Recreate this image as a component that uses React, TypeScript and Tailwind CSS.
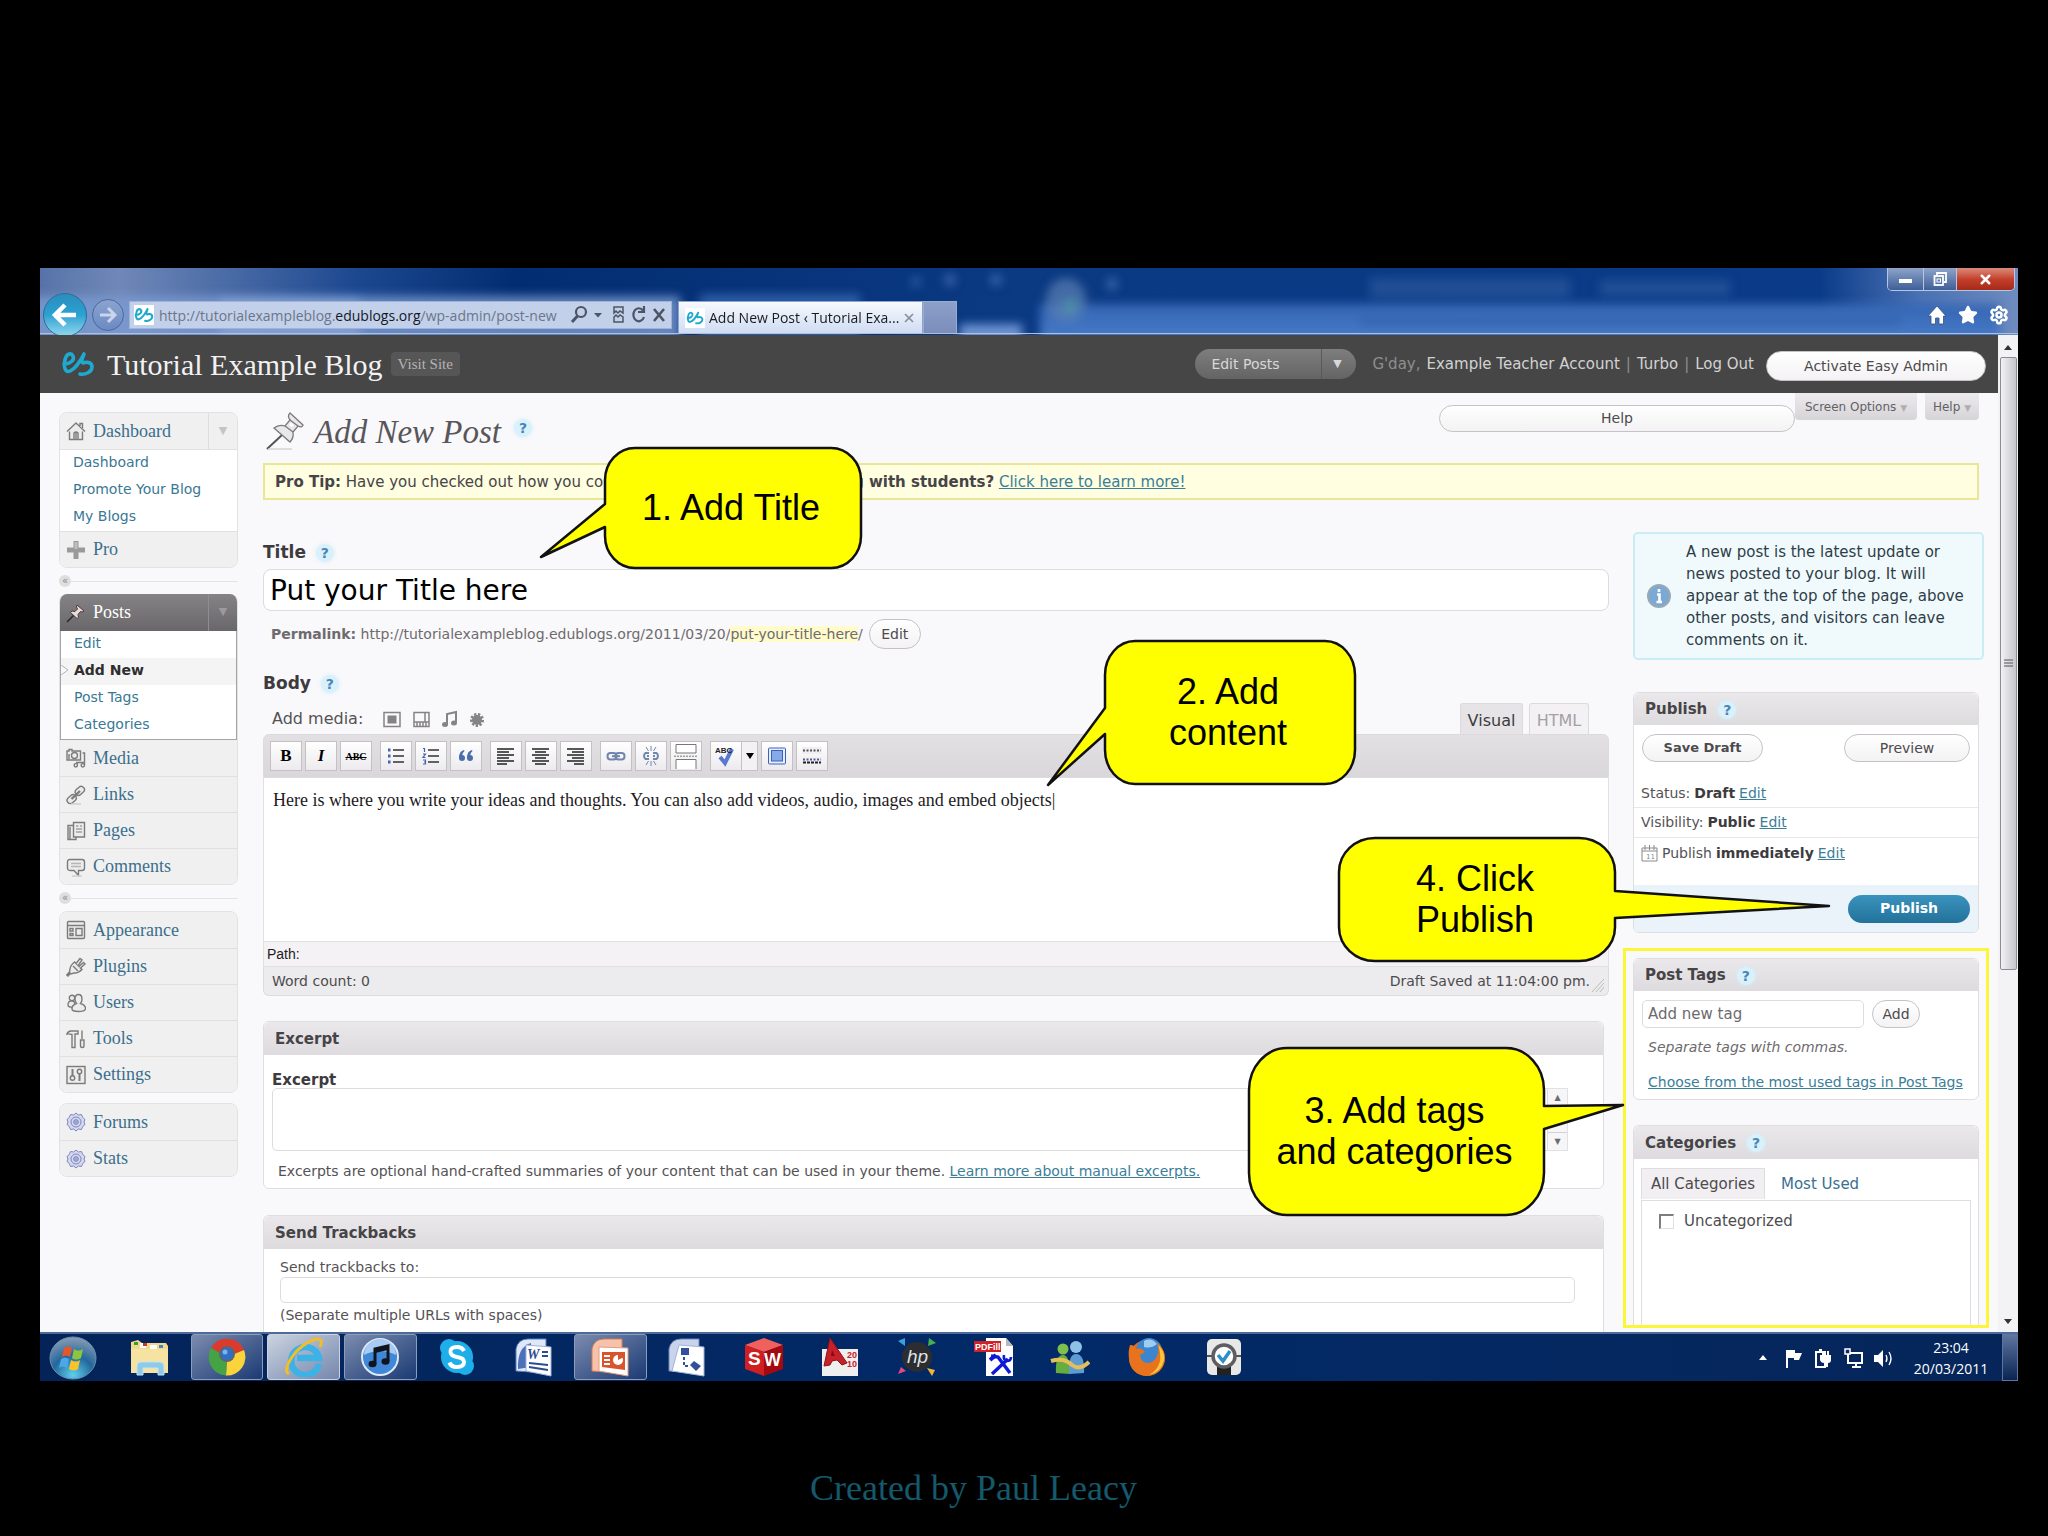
import type { ReactNode } from 'react';
import { Star, Settings, X } from 'lucide-react';

const Logo = ({ className }: { className: string }) => (
  <svg viewBox="0 0 34 26" className={className} fill="none" aria-hidden="true">
    <path
      d="M3 13C9 13 14 9 12 5C10 1 5 3 4 9C2 17 5 22 9 20C14 18 20 9 23 3C21 8 20 11 22 12C27 10 31 12 31 16C31 21 24 24 19 23"
      stroke="#1fa9cf"
      strokeWidth="3.600"
      strokeLinecap="round"
      strokeLinejoin="round"
    />
  </svg>
);

const HelpDot = () => (
  <button
    aria-label="Help"
    className="flex h-[18px] w-[18px] items-center justify-center rounded-full bg-[#d9f1fb] text-[14px] leading-none font-bold text-[#4a84b8] shadow-[0_0_4px_#d3effb]"
  >
    ?
  </button>
);

const icon = 'h-5 w-5 shrink-0';
const line = { fill: '#ececec', stroke: '#7b7b7b', strokeWidth: 1.4 };

const DashboardIcon = () => (
  <svg viewBox="0 0 20 20" className={icon} {...line}>
    <path d="M3.500 9V18.500H16.500V9" />
    <path d="M1 10.500L10 2L19 10.500" strokeLinejoin="round" />
    <path d="M14 5V2.500H16.500V7" />
    <path d="M8 18V12Q10 10 12 12V18M10 11V18" />
  </svg>
);
const ProIcon = () => (
  <svg viewBox="0 0 20 20" className={icon}>
    <path d="M7.500 1H12.500V7.500H19V12.500H12.500V19H7.500V12.500H1V7.500H7.500Z" fill="#9a9a9a" />
    <path d="M8.500 2H11.500V9H8.500Z" fill="#bdbdbd" />
  </svg>
);
const PinIcon = () => (
  <svg viewBox="0 0 20 20" className={icon}>
    <path d="M8 12L1 19" stroke="#2b2b2b" strokeWidth="1.600" />
    <path
      d="M11 2L18 8L16 9L14.500 8.500L12 11.500L12.500 14.500L11 15.500L4.500 9.500L6 8L9 8.500L11.500 6L10.500 4Z"
      fill="#e9dcd8"
      stroke="#4a3b38"
    />
  </svg>
);
const MediaIcon = () => (
  <svg viewBox="0 0 20 20" className={icon} {...line}>
    <path d="M1 3H3V1.500H6V3H14.500V12H1Z" />
    <circle cx="8.500" cy="7.500" r="3" />
    <path d="M3 6V11" />
    <path d="M16.500 5H18.500V17M10 14.500H18.500M11 17V14" />
    <circle cx="9.800" cy="17.300" r="1.700" />
    <circle cx="16.800" cy="17.300" r="1.700" />
  </svg>
);
const LinksIcon = () => (
  <svg viewBox="0 0 20 20" className={icon} {...line}>
    <rect x="9" y="2.500" width="10" height="6.500" rx="3.200" transform="rotate(-42 14 6)" />
    <rect x="0.500" y="11" width="10" height="6.500" rx="3.200" transform="rotate(-42 5.500 14)" />
    <path d="M5.500 14L14 6" strokeWidth="2.400" />
    <path d="M5 19H15" stroke="#cfcfcf" />
  </svg>
);
const PagesIcon = () => (
  <svg viewBox="0 0 20 20" className={icon} {...line}>
    <path d="M2 4.500H10V18.500H2Z" />
    <path d="M4 18V6" />
    <path d="M7.500 1.500H18.500V16H7.500Z" />
    <path d="M10 5H12.500M14 5H16M10 8H16M10 11H16" strokeWidth="1" />
  </svg>
);
const CommentsIcon = () => (
  <svg viewBox="0 0 20 20" className={icon} {...line}>
    <path d="M4 2.500H16Q18.500 2.500 18.500 5V11Q18.500 13.500 16 13.500H12.500V18.500L8 13.500H4Q1.500 13.500 1.500 11V5Q1.500 2.500 4 2.500Z" />
    <path d="M5 6.500H15M5 9.500H15" stroke="#b5b5b5" />
    <path d="M6 19H16" stroke="#cfcfcf" />
  </svg>
);
const AppearanceIcon = () => (
  <svg viewBox="0 0 20 20" className={icon} {...line}>
    <rect x="1.500" y="1.500" width="17" height="17" rx="1" />
    <path d="M2 5.500H18" />
    <path d="M4 8.500H7V11H4ZM4 13.500H7V15.500H4ZM10 8.500H16V15.500H10Z" />
  </svg>
);
const PluginsIcon = () => (
  <svg viewBox="0 0 20 20" className={icon} {...line}>
    <path d="M1 19L4.500 15" strokeWidth="3" />
    <path d="M8.500 5L16 12.500Q12 16.500 8 16L5 17L3.500 15.500L4 12Q4.500 8 8.500 5Z" />
    <path d="M10 6.500L14 1.500L16 3L12.500 8M14 11.500L19 7L17.500 5.500L13 9.500" />
    <path d="M7 9L12 14" />
  </svg>
);
const UsersIcon = () => (
  <svg viewBox="0 0 20 20" className={icon} {...line}>
    <circle cx="6" cy="5" r="2.700" />
    <path d="M2 12Q2 7.500 6 8Q9 8 9 12L7 14Q2 14.500 2 12Z" />
    <path d="M9 6Q9 1.500 12.500 1.500Q16 1.500 16 6Q16 9 14.500 10.500Q19.500 12 19.500 15.500Q19.500 18.500 12.500 18.500Q5.500 18.500 6 15.500Q6 12 10.500 10.500Q9 9 9 6Z" />
  </svg>
);
const ToolsIcon = () => (
  <svg viewBox="0 0 20 20" className={icon} {...line}>
    <path d="M1 5Q2 1.500 6 2H12V5H9V18.500H6V5.500Q3 4.500 1 5Z" />
    <path d="M16 1.500V10M14.500 11H18V17Q18 18.500 16.300 18.500Q14.500 18.500 14.500 17Z" />
  </svg>
);
const SettingsIcon = () => (
  <svg viewBox="0 0 20 20" className={icon} {...line}>
    <rect x="1" y="1.500" width="18" height="17" />
    <path d="M6.500 4V11M13.500 9V16" strokeWidth="2" />
    <circle cx="6.500" cy="13" r="2.200" />
    <circle cx="13.500" cy="6.500" r="2.200" />
  </svg>
);
const GearIcon = () => (
  <svg viewBox="0 0 20 20" className={icon} fill="#d5d8f2" stroke="#7e86b8">
    <path d="M10 1L12.300 3L15.500 2.500L16.700 5.500L19 7.500L18 10L19 12.500L16.700 14.500L15.500 17.500L12.300 17L10 19L7.700 17L4.500 17.500L3.300 14.500L1 12.500L2 10L1 7.500L3.300 5.500L4.500 2.500L7.700 3Z" />
    <circle cx="10" cy="10" r="5" />
    <circle cx="10" cy="10" r="2.400" />
    <rect x="9" y="9" width="2" height="2" fill="#fff" />
  </svg>
);

type MenuItemProps = { label: string; children: ReactNode; first?: boolean };

const MenuItem = ({ label, children, first }: MenuItemProps) => (
  <a
    href="#"
    className={`flex h-9 items-center gap-[7px] bg-[#f1f0f1] pl-[6px] font-['Liberation_Serif',serif] text-[18px] text-[#3a6f8c] ${
      first ? '' : 'border-t border-[#e0e0e0]'
    }`}
  >
    {children}
    {label}
  </a>
);

const Separator = () => (
  <div className="flex h-[26px] items-center">
    <span className="flex h-3 w-3 items-center justify-center rounded-full bg-[#dedede] text-[10px] leading-none text-[#8a8a8a]">
      «
    </span>
    <span className="h-px flex-1 bg-[#e4e4e4]" />
  </div>
);

const menuBox = 'overflow-hidden rounded-[8px] border border-[#e2e2e2]';
const subLink = 'block h-[27px] pl-[13px] text-[14px] leading-6';

const Sidebar = () => (
  <nav className="w-[179px] shrink-0 pt-[19px]">
    <div className={menuBox}>
      <div className="flex">
        <div className="flex-1">
          <MenuItem label="Dashboard" first>
            <DashboardIcon />
          </MenuItem>
        </div>
        <button
          aria-label="Toggle Dashboard"
          className="w-[29px] border-l border-[#dedede] bg-[#f1f0f1] text-[11px] text-[#c4c4c4]"
        >
          ▼
        </button>
      </div>
      <div className="border-t border-[#e0e0e0] bg-white text-[#3a7894]">
        <a href="#" className={subLink}>Dashboard</a>
        <a href="#" className={subLink}>Promote Your Blog</a>
        <a href="#" className={subLink}>My Blogs</a>
      </div>
      <MenuItem label="Pro">
        <ProIcon />
      </MenuItem>
    </div>

    <Separator />

    <div className="overflow-hidden rounded-[8px] border-x border-b border-[#e2e2e2]">
      <div className="flex h-[37px] bg-linear-to-b from-[#858385] to-[#69676a] text-white">
        <a
          href="#"
          className="flex flex-1 items-center gap-[7px] pl-[6px] font-['Liberation_Serif',serif] text-[18px]"
        >
          <PinIcon />
          Posts
        </a>
        <button
          aria-label="Toggle Posts"
          className="w-[29px] border-l border-[#8f8d8f] text-[11px] text-[#9b999b]"
        >
          ▼
        </button>
      </div>
      <div className="border border-t-0 border-[#a5a5a5] bg-white text-[#3a7894]">
        <a href="#" className={subLink}>Edit</a>
        <a href="#" className={`${subLink} relative bg-[#f5f4f5] text-[13px] font-bold text-[#2e2e2e]`}>
          <svg viewBox="0 0 8 10" className="absolute top-[7px] left-0 h-[10px] w-2">
            <path d="M0 0L7 5L0 10" fill="#f8f8f8" stroke="#b5b5b5" />
          </svg>
          Add New
        </a>
        <a href="#" className={subLink}>Post Tags</a>
        <a href="#" className={subLink}>Categories</a>
      </div>
      <MenuItem label="Media" first>
        <MediaIcon />
      </MenuItem>
      <MenuItem label="Links">
        <LinksIcon />
      </MenuItem>
      <MenuItem label="Pages">
        <PagesIcon />
      </MenuItem>
      <MenuItem label="Comments">
        <CommentsIcon />
      </MenuItem>
    </div>

    <Separator />

    <div className={menuBox}>
      <MenuItem label="Appearance" first>
        <AppearanceIcon />
      </MenuItem>
      <MenuItem label="Plugins">
        <PluginsIcon />
      </MenuItem>
      <MenuItem label="Users">
        <UsersIcon />
      </MenuItem>
      <MenuItem label="Tools">
        <ToolsIcon />
      </MenuItem>
      <MenuItem label="Settings">
        <SettingsIcon />
      </MenuItem>
    </div>

    <div className={`mt-[10px] ${menuBox}`}>
      <MenuItem label="Forums" first>
        <GearIcon />
      </MenuItem>
      <MenuItem label="Stats">
        <GearIcon />
      </MenuItem>
    </div>
  </nav>
);

/* Browser chrome */

const ChromeBackdrop = () => (
  <svg
    viewBox="0 0 1978 67"
    preserveAspectRatio="none"
    className="absolute inset-0 h-full w-full"
    aria-hidden="true"
  >
    <defs>
      <linearGradient id="glass" x1="0" x2="1" y1="0" y2="0">
        <stop offset="0" stopColor="#5673a8" />
        <stop offset="0.040" stopColor="#7088b8" />
        <stop offset="0.160" stopColor="#1c4890" />
        <stop offset="0.240" stopColor="#032d72" />
        <stop offset="0.500" stopColor="#0b3a83" />
        <stop offset="0.900" stopColor="#0b3b88" />
        <stop offset="0.950" stopColor="#4a72b4" />
        <stop offset="1" stopColor="#6f8cc0" />
      </linearGradient>
      <linearGradient id="band" x1="0" x2="0" y1="0" y2="1">
        <stop offset="0" stopColor="#3465b3" />
        <stop offset="1" stopColor="#4c80cd" />
      </linearGradient>
      <filter id="soft" x="-20%" y="-40%" width="140%" height="180%">
        <feGaussianBlur stdDeviation="5" />
      </filter>
    </defs>
    <rect width="1978" height="67" fill="url(#glass)" />
    <g filter="url(#soft)">
      <rect x="-20" y="28" width="660" height="50" fill="#7c9bd1" opacity="0.800" />
      <rect x="180" y="28" width="140" height="50" fill="#8eaadb" opacity="0.600" />
      <rect x="660" y="26" width="160" height="50" fill="#3c6cb5" opacity="0.700" />
      <rect x="920" y="56" width="62" height="20" fill="#6c93d2" />
      <rect x="1000" y="36" width="960" height="44" fill="url(#band)" />
      <ellipse cx="1026" cy="32" rx="20" ry="22" fill="#5b7fb4" opacity="0.700" />
      <ellipse cx="1030" cy="38" rx="8" ry="9" fill="#4f93a8" opacity="0.700" />
      <circle cx="876" cy="14" r="5" fill="#2d5ca2" />
      <circle cx="910" cy="12" r="6" fill="#3463a8" />
      <circle cx="956" cy="12" r="6" fill="#3463a8" />
      <circle cx="1072" cy="16" r="6" fill="#3463a8" />
      <rect x="1330" y="10" width="200" height="20" fill="#2f5a9f" opacity="0.600" />
      <rect x="1560" y="12" width="130" height="16" fill="#2f5a9f" opacity="0.600" />
      <rect x="1320" y="50" width="540" height="8" fill="#2d5ba8" opacity="0.600" />
    </g>
    <rect y="65" width="1978" height="1" fill="#aebfe0" />
  </svg>
);

const BrowserBar = () => (
  <div className="relative flex h-[67px] overflow-hidden bg-[#0a377f]">
    <ChromeBackdrop />
    <div className="relative flex flex-1 items-end">
      <div className="flex h-11 items-center gap-[5px] pl-[3px]">
        <button
          aria-label="Back"
          className="mt-[4px] flex h-11 w-11 items-center justify-center rounded-full border border-[#2c6c9c] bg-linear-to-b from-[#2a8dbd] via-[#2aa2d2] to-[#8ed6ec]"
        >
          <svg viewBox="0 0 28 28" className="h-7 w-7">
            <path d="M14 4L4 14L14 24M5 14H25" fill="none" stroke="#fff" strokeWidth="4.500" />
          </svg>
        </button>
        <button
          aria-label="Forward"
          className="mt-[4px] flex h-8 w-8 items-center justify-center rounded-full border border-[#4d689c] bg-linear-to-b from-[#8ba3cf] to-[#6c8bc4]"
        >
          <svg viewBox="0 0 20 20" className="h-5 w-5">
            <path d="M10 3L17 10L10 17M17 10H2" fill="none" stroke="#c9d5ea" strokeWidth="3" />
          </svg>
        </button>
      </div>

      <div className="mb-[6px] ml-[5px] flex h-7 w-[543px] items-center border border-[#9fb3da] bg-[#c3d0ea] pr-1 pl-1">
        <span className="mr-[5px] flex h-5 w-5 items-center justify-center bg-white">
          <Logo className="h-4 w-5" />
        </span>
        <div className="flex-1 font-['Open_Sans',sans-serif] text-[14px] whitespace-nowrap text-[#6b7688]">
          http://tutorialexampleblog.<span className="text-[#14181f]">edublogs.org</span>
          /wp-admin/post-new
        </div>
        <svg viewBox="0 0 100 22" className="h-[22px] w-[100px] shrink-0" fill="none" stroke="#4c5564" strokeWidth="2.200">
          <circle cx="14" cy="8" r="5" />
          <path d="M10.500 12L5 18" strokeWidth="3" />
          <path d="M27 9H35L31 13.500Z" fill="#4c5564" stroke="none" />
          <path d="M47 3H56V9L53 7L51 9L49 7L47 9ZM47 18H56V13L53 11L51 13L49 11L47 13Z" strokeWidth="1.500" />
          <path d="M76 6.500A5.500 6.500 0 1 0 77 13M77 2V8H71" />
          <path d="M87 5L97 17M97 5L87 17" strokeWidth="2.600" />
        </svg>
      </div>

      <div className="mb-[2px] ml-[6px] flex h-8 w-[245px] items-center border border-b-0 border-[#8ea4cd] bg-linear-to-b from-[#f7fafe] to-[#cfdcf3] px-[6px]">
        <span className="mr-1 flex h-5 w-5 items-center justify-center bg-white">
          <Logo className="h-4 w-[18px]" />
        </span>
        <span className="flex-1 font-['Open_Sans',sans-serif] text-[14px] whitespace-nowrap text-[#1b1b1b]">
          Add New Post ‹ Tutorial Exa...
        </span>
        <X className="h-[14px] w-[14px] text-[#8a8f99]" strokeWidth={3} />
      </div>
      <button
        aria-label="New tab"
        className="mb-[2px] h-8 w-[34px] border border-b-0 border-[#9aabd0] bg-linear-to-b from-[#8da0c9] to-[#7b8dbb]"
      />
    </div>

    <div className="relative flex flex-col items-end pr-[3px]">
      <div className="flex h-[23px] overflow-hidden rounded-b-[5px] border border-t-0 border-[#b6c6e2]">
        <button aria-label="Minimize" className="flex w-9 items-end justify-center border-r border-[#b6c6e2] bg-linear-to-b from-[#8ea4c9] to-[#3f5f98] pb-[7px]">
          <span className="h-1 w-[13px] bg-white" />
        </button>
        <button aria-label="Restore" className="flex w-[33px] items-center justify-center border-r border-[#b6c6e2] bg-linear-to-b from-[#8ea4c9] to-[#3f5f98]">
          <svg viewBox="0 0 14 14" className="h-[14px] w-[14px]" fill="none" stroke="#fff" strokeWidth="1.800">
            <path d="M4 3V1H13V10H11" />
            <rect x="1.500" y="4" width="8.500" height="9" />
            <rect x="4" y="7" width="3.500" height="3" strokeWidth="1" />
          </svg>
        </button>
        <button aria-label="Close" className="flex w-[57px] items-center justify-center bg-linear-to-b from-[#d98a7c] via-[#c4402c] to-[#a52a18]">
          <X className="h-[15px] w-[15px] text-white" strokeWidth={4} />
        </button>
      </div>
      <div className="flex h-[43px] items-center gap-[11px] pt-1 pr-[6px] text-white">
        <svg viewBox="0 0 20 20" className="h-5 w-5">
          <path d="M10 1L19 11H16.500V19H12V13H8.500V19H4V11H1Z" fill="#fff" stroke="#37507f" strokeWidth="0.800" />
        </svg>
        <Star className="h-5 w-5" fill="#fff" />
        <Settings className="h-5 w-5" strokeWidth={3} />
      </div>
    </div>
  </div>
);

const pill =
  'rounded-full border border-[#c4c2c5] bg-linear-to-b from-white to-[#f4f2f4] text-[#4c4a4d]';

const BlogHeader = () => (
  <header className="flex h-[58px] items-center bg-[#464646] pr-3 pl-[21px]">
    <Logo className="h-7 w-[34px]" />
    <h1 className="ml-3 font-['Liberation_Serif',serif] text-[30px] text-[#f2f2f2]">
      Tutorial Example Blog
    </h1>
    <a
      href="#"
      className="ml-2 rounded-[4px] bg-[#575657] px-[7px] py-px font-['Liberation_Serif',serif] text-[15px] text-[#b4b3b4]"
    >
      Visit Site
    </a>
    <div className="ml-auto flex h-[30px] w-[161px] overflow-hidden rounded-full bg-linear-to-b from-[#7f7e7f] to-[#656465] text-[#d8d8d8]">
      <a href="#" className="flex flex-1 items-center pl-4 text-[14px]">
        Edit Posts
      </a>
      <button aria-label="More shortcuts" className="w-[35px] border-l border-[#5a595a] pr-1 text-[11px]">
        ▼
      </button>
    </div>
    <p className="ml-4 flex gap-[6px] text-[15px] text-[#8f8e8f]">
      G'day,
      <a href="#" className="text-[#d2d2d2]">Example Teacher Account</a>
      <span>|</span>
      <a href="#" className="text-[#d2d2d2]">Turbo</a>
      <span>|</span>
      <a href="#" className="text-[#d2d2d2]">Log Out</a>
    </p>
    <button className={`${pill} mt-1 ml-3 h-[30px] w-[220px] text-[14px]`}>Activate Easy Admin</button>
  </header>
);

/* Editor */

const toolBtn =
  'flex h-[30px] w-8 shrink-0 items-center justify-center border border-[#c3c1c4] bg-linear-to-b from-white to-[#eceaed] text-black';

const AlignIcon = ({ d }: { d: string }) => (
  <svg viewBox="0 0 20 18" className="h-[18px] w-5" stroke="#222" strokeWidth="1.600">
    <path d={d} />
  </svg>
);

const Toolbar = () => (
  <div className="flex h-11 items-center gap-2 rounded-t-[6px] border border-[#dcdadd] bg-linear-to-b from-[#e2e0e3] to-[#d9d7da] pl-[6px]">
    <div className="flex gap-[3px]">
      <button aria-label="Bold" className={`${toolBtn} font-['Liberation_Serif',serif] text-[17px] font-bold`}>B</button>
      <button aria-label="Italic" className={`${toolBtn} font-['Liberation_Serif',serif] text-[17px] font-bold italic`}>I</button>
      <button aria-label="Strikethrough" className={`${toolBtn} font-['Liberation_Serif',serif] text-[10px] font-bold line-through`}>ABC</button>
    </div>
    <div className="flex gap-[3px]">
      <button aria-label="Bulleted list" className={toolBtn}>
        <svg viewBox="0 0 20 18" className="h-[18px] w-5">
          <path d="M7 3H18M7 9H18M7 15H18" stroke="#333" strokeWidth="1.500" />
          <path d="M2 1.500H4.500V4.500H2ZM2 7.500H4.500V10.500H2ZM2 13.500H4.500V16.500H2Z" fill="#4560b5" />
        </svg>
      </button>
      <button aria-label="Numbered list" className={toolBtn}>
        <svg viewBox="0 0 20 18" className="h-[18px] w-5">
          <path d="M7 3H18M7 9H18M7 15H18" stroke="#333" strokeWidth="1.500" />
          <path d="M2 1.500H3.500V5M2 7H4.500L2 10.500H4.500M2 13H4.500V17H2M3 15H4.500" fill="none" stroke="#4560b5" strokeWidth="1.200" />
        </svg>
      </button>
      <button aria-label="Quote" className={toolBtn}>
        <svg viewBox="0 0 20 18" className="h-[18px] w-5" fill="#4a6ea9">
          <circle cx="6" cy="11" r="3" />
          <circle cx="14" cy="11" r="3" />
          <path d="M3 11Q3 4 8 3L8.500 4Q6 6 6 9ZM11 11Q11 4 16 3L16.500 4Q14 6 14 9Z" />
        </svg>
      </button>
    </div>
    <div className="flex gap-[3px]">
      <button aria-label="Align left" className={toolBtn}><AlignIcon d="M1 2H18M1 5H13M1 8H18M1 11H13M1 14H18M1 17H11" /></button>
      <button aria-label="Align center" className={toolBtn}><AlignIcon d="M1 2H18M4 5H15M1 8H18M4 11H15M1 14H18M4 17H15" /></button>
      <button aria-label="Align right" className={toolBtn}><AlignIcon d="M1 2H18M6 5H18M1 8H18M6 11H18M1 14H18M8 17H18" /></button>
    </div>
    <div className="flex gap-[3px]">
      <button aria-label="Insert link" className={toolBtn}>
        <svg viewBox="0 0 20 18" className="h-[18px] w-5" fill="none" stroke="#7086ad" strokeWidth="2">
          <rect x="1.500" y="6" width="9" height="6.500" rx="3" />
          <rect x="9.500" y="6" width="9" height="6.500" rx="3" />
          <path d="M6 9.200H14" />
        </svg>
      </button>
      <button aria-label="Remove link" className={toolBtn}>
        <svg viewBox="0 0 20 20" className="h-5 w-5" fill="none" stroke="#7086ad" strokeWidth="2">
          <path d="M8 7H4.500A3 3.500 0 0 0 4.500 13H8M12 7H15.500A3 3.500 0 0 1 15.500 13H12M6 10H8M12 10H14" />
          <path d="M10 0V5M5 1L7.500 5M15 1L12.500 5M10 20V15M5 19L7.500 15M15 19L12.500 15" strokeWidth="1" />
        </svg>
      </button>
      <button aria-label="Insert more tag" className={toolBtn}>
        <svg viewBox="0 0 24 26" className="h-[26px] w-6" fill="#fff" stroke="#777">
          <path d="M2 1.500H22V10H2ZM2 26V16.500H22V26" />
          <path d="M0 13.200H24" strokeDasharray="2 1" />
        </svg>
      </button>
    </div>
    <div className="flex gap-[3px]">
      <div className="flex">
        <button aria-label="Check spelling" className={toolBtn}>
          <svg viewBox="0 0 24 22" className="h-[22px] w-6">
            <path d="M6 12L11 18L18 4" fill="none" stroke="#5a78d0" strokeWidth="4" />
            <text x="1" y="8" fontSize="8" fontWeight="700" fontFamily="Liberation Sans" fill="#222">ABC</text>
          </svg>
        </button>
        <button aria-label="Spelling languages" className="flex h-[30px] w-4 items-center justify-center border border-l-0 border-[#c3c1c4] bg-[#f3f1f4]">
          <svg viewBox="0 0 8 6" className="h-[6px] w-2"><path d="M0 0H8L4 6Z" /></svg>
        </button>
      </div>
      <button aria-label="Full screen" className={toolBtn}>
        <svg viewBox="0 0 20 18" className="h-[18px] w-5" stroke="#3c62b8">
          <rect x="1.500" y="1" width="17" height="16" rx="1" fill="#e7eefb" />
          <rect x="4.500" y="3.500" width="11" height="10.500" fill="#86a9ea" />
        </svg>
      </button>
      <button aria-label="Kitchen sink" className={toolBtn}>
        <svg viewBox="0 0 22 20" className="h-5 w-[22px]">
          <path d="M1 1H21V8H1ZM1 11H21V19H1Z" fill="#f0eef1" />
          <path d="M2 4.500H20" stroke="#555" strokeWidth="2" strokeDasharray="2 1.500" />
          <path d="M2 13.500H20" stroke="#4a5e9b" strokeWidth="2" strokeDasharray="2 1.500" />
          <path d="M2 16.500H20" stroke="#222" strokeWidth="2" strokeDasharray="3 1" />
        </svg>
      </button>
    </div>
  </div>
);

const boxHead =
  'flex items-center rounded-t-[6px] bg-linear-to-b from-[#eae8eb] to-[#dddbde] pt-px text-[15px] font-bold text-[#464447]';
const link = 'text-[#3a7e98] underline';
const field = 'rounded-[5px] border border-[#dddbde] bg-white';

const EditorColumn = () => (
  <main className="min-w-0 flex-1">
    <div className="flex h-8 items-center gap-[10px]">
      <label htmlFor="title" className="text-[17px] font-bold text-[#3d3b3e]">Title</label>
      <HelpDot />
    </div>
    <input
      id="title"
      defaultValue="Put your Title here"
      className={`${field} h-[42px] w-full rounded-[8px] px-[6px] pt-[2px] text-[28px] text-black`}
    />
    <div className="mt-2 flex h-[30px] items-center pl-2 text-[14px] text-[#6d6b6e]">
      <p>
        <b>Permalink:</b> http://tutorialexampleblog.edublogs.org/2011/03/20/
        <span className="bg-[#fffbcc]">put-your-title-here</span>/
      </p>
      <button className={`${pill} ml-[6px] h-[30px] w-[52px]`}>Edit</button>
    </div>
    <div className="mt-[19px] flex h-8 items-center gap-[10px]">
      <label htmlFor="body" className="text-[17px] font-bold text-[#3d3b3e]">Body</label>
      <HelpDot />
    </div>

    <div className="mt-[3px] flex h-[31px] items-end justify-between pr-5 pl-[9px]">
      <div className="flex h-[31px] items-center gap-2 text-[16px] text-[#545255]">
        Add media:
        <svg viewBox="0 0 104 20" className="ml-[11px] h-5 w-[104px]" fill="none" stroke="#858386">
          <rect x="2" y="3.500" width="16" height="14" strokeWidth="1.500" />
          <rect x="6" y="7" width="8" height="7" fill="#858386" />
          <path d="M32 3.500H47V17.500H32ZM43 4V13M32 13H47M35 13V17M38 13V17M41 13V17M44 13V17" strokeWidth="1.500" />
          <path d="M65 15V5L74 3V13" strokeWidth="2" />
          <ellipse cx="63" cy="15.500" rx="3" ry="2.500" fill="#858386" stroke="none" />
          <ellipse cx="72" cy="14" rx="3" ry="2.500" fill="#858386" stroke="none" />
          <circle cx="95" cy="11" r="5" fill="#858386" strokeWidth="4" strokeDasharray="2 1.400" />
        </svg>
      </div>
      <div className="flex gap-[6px]">
        <button className="h-[31px] w-[63px] rounded-t-[3px] border border-b-0 border-[#dcdadd] bg-[#e6e4e7] pt-1 text-[16px] text-[#3d3b3e]">
          Visual
        </button>
        <button className="h-[31px] w-[60px] rounded-t-[3px] border border-b-0 border-[#dcdadd] bg-[#f3f1f4] pt-1 text-[16px] text-[#a3a1a4]">
          HTML
        </button>
      </div>
    </div>
    <Toolbar />
    <textarea
      id="body"
      defaultValue="Here is where you write your ideas and thoughts. You can also add videos, audio, images and embed objects|"
      className="block h-[163px] w-full resize-none border-x border-[#e2e0e3] bg-white px-[9px] pt-[10px] font-['Liberation_Serif',serif] text-[18px] leading-6 text-[#1d1b1e]"
    />
    <div className="flex h-[26px] items-center border border-[#e2e0e3] bg-[#f4f2f5] pl-[3px] font-['Liberation_Sans',sans-serif] text-[14px] text-[#1d1b1e]">
      Path:
    </div>
    <div className="flex h-[29px] items-center justify-between rounded-b-[6px] border border-t-0 border-[#dcdadd] bg-[#ecebed] pr-1 pl-2 text-[14px] text-[#4d4b4e]">
      <span>Word count: 0</span>
      <span className="flex items-end">
        Draft Saved at 11:04:00 pm.
        <svg viewBox="0 0 14 14" className="mt-2 h-[14px] w-[14px]" stroke="#bbb">
          <path d="M2 14L14 1M6 14L14 5M10 14L14 9" />
        </svg>
      </span>
    </div>

    <section className="mt-[25px] mr-[5px] rounded-[6px] border border-[#dfdde0] bg-white pb-[5px]">
      <h2 className={`${boxHead} h-[33px] pl-[11px]`}>Excerpt</h2>
      <label htmlFor="excerpt" className="block pt-[17px] pl-2 text-[15px] leading-4 font-bold text-[#3d3b3e]">
        Excerpt
      </label>
      <div className="mr-[35px] ml-2 flex">
        <textarea id="excerpt" className={`${field} h-[63px] flex-1 resize-none rounded-r-none`} />
        <div className="flex h-[63px] w-5 flex-col justify-between border border-l-0 border-[#e2e0e3] bg-[#f6f5f7]">
          <button aria-label="Scroll up" className="h-[18px] border-b border-[#d4d2d5] text-[8px] text-[#6d6b6e]">▲</button>
          <button aria-label="Scroll down" className="h-[18px] border-t border-[#d4d2d5] text-[8px] text-[#6d6b6e]">▼</button>
        </div>
      </div>
      <p className="mt-2 pl-[14px] text-[14px] leading-6 text-[#545255]">
        Excerpts are optional hand-crafted summaries of your content that can be used in your theme.{' '}
        <a href="#" className={link}>Learn more about manual excerpts.</a>
      </p>
    </section>

    <section className="mt-[26px] mr-[5px] rounded-t-[6px] border border-b-0 border-[#dfdde0] bg-white pb-[5px]">
      <h2 className={`${boxHead} h-[33px] pl-[11px]`}>Send Trackbacks</h2>
      <div className="pr-7 pl-4 text-[14px] text-[#545255]">
        <label htmlFor="trackbacks" className="block pt-[8px] leading-5">Send trackbacks to:</label>
        <input id="trackbacks" className={`${field} h-[26px] w-full`} />
        <p className="leading-6">(Separate multiple URLs with spaces)</p>
      </div>
    </section>
  </main>
);

/* Right-hand panels */

const panel = 'rounded-[6px] border border-[#dfdde0] bg-white';

const PublishPanel = () => (
  <section className={`${panel} mx-[10px] mt-8 overflow-hidden text-[14px] text-[#545255]`}>
    <h2 className={`${boxHead} h-8 gap-[11px] pl-[11px]`}>
      Publish <HelpDot />
    </h2>
    <div className="flex justify-between px-2 pt-[9px]">
      <button className={`${pill} h-7 w-[121px] text-[13px] font-bold`}>Save Draft</button>
      <button className={`${pill} h-7 w-[126px] text-[14px]`}>Preview</button>
    </div>
    <p className="mt-[17px] flex h-[29px] items-center gap-1 border-b border-[#e9e7ea] pl-[7px]">
      Status: <b className="text-[#3d3b3e]">Draft</b> <a href="#" className={link}>Edit</a>
    </p>
    <p className="flex h-[30px] items-center gap-1 border-b border-[#e9e7ea] pl-[7px]">
      Visibility: <b className="text-[#3d3b3e]">Public</b> <a href="#" className={link}>Edit</a>
    </p>
    <p className="flex h-[30px] items-center gap-1 pl-[7px]">
      <svg viewBox="0 0 17 17" className="h-[17px] w-[17px]" fill="#fff" stroke="#8a888b">
        <path d="M1 3H16V16H1ZM1 6H16M4 0V5M8.500 0V5M13 0V5" />
        <text x="5" y="14" fontSize="7" stroke="none" fill="#8a888b">11</text>
      </svg>
      Publish <b className="text-[#3d3b3e]">immediately</b> <a href="#" className={link}>Edit</a>
    </p>
    <div className="mt-[17px] flex h-[47px] items-center justify-end bg-[#eaf2fa] pr-2">
      <button className="h-7 w-[122px] rounded-full bg-linear-to-b from-[#3a93bd] to-[#22729b] text-[14px] font-bold text-white">
        Publish
      </button>
    </div>
  </section>
);

const RightColumn = () => (
  <aside className="flex w-[366px] shrink-0 flex-col">
    <div className="mr-[5px] ml-[10px] flex items-center rounded-[5px] border-2 border-[#c9edf3] bg-[#f0fafd] py-[7px] pl-3">
      <svg viewBox="0 0 24 24" className="h-6 w-6 shrink-0">
        <circle cx="12" cy="12" r="11" fill="#7aa9d6" stroke="#9aa8b5" strokeWidth="2" />
        <path d="M12 5V8M10 10.500H12.500V18M9.500 18H15" stroke="#fff" strokeWidth="2.600" fill="none" />
      </svg>
      <p className="ml-[15px] text-[15px] leading-[22px] whitespace-nowrap text-[#2f3d47]">
        A new post is the latest update or
        <br />
        news posted to your blog. It will
        <br />
        appear at the top of the page, above
        <br />
        other posts, and visitors can leave
        <br />
        comments on it.
      </p>
    </div>

    <PublishPanel />

    <div className="mt-[15px] mb-1 flex flex-1 flex-col border-[3px] border-[#fbf63a] px-[7px] pt-[7px]">
      <section className={`${panel} text-[14px] text-[#545255]`}>
        <h2 className={`${boxHead} h-8 gap-[11px] pl-[11px]`}>
          Post Tags <HelpDot />
        </h2>
        <div className="flex gap-2 px-2 pt-[9px]">
          <input
            aria-label="Add new tag"
            placeholder="Add new tag"
            className={`${field} h-7 w-[222px] px-[5px] text-[15px] placeholder:text-[#6d6b6e]`}
          />
          <button className={`${pill} h-7 w-12 text-[14px]`}>Add</button>
        </div>
        <p className="pt-[9px] pl-[14px] leading-5 text-[#6d6b6e] italic">Separate tags with commas.</p>
        <p className="pt-[15px] pb-[7px] pl-[14px] leading-5">
          <a href="#" className={link}>Choose from the most used tags in Post Tags</a>
        </p>
      </section>

      <section className={`${panel} mt-[25px] flex flex-1 flex-col rounded-b-none border-b-0 text-[#4d4b4e]`}>
        <h2 className={`${boxHead} h-[33px] gap-[11px] pl-[11px]`}>
          Categories <HelpDot />
        </h2>
        <div className="flex px-[7px] pt-[9px]">
          <button className="relative -mb-px h-[31px] w-[124px] border border-b-0 border-[#dfdde0] bg-[#f1eff2] text-[15px]">
            All Categories
          </button>
          <a href="#" className="flex h-8 items-center pl-4 text-[15px] text-[#3a7090]">
            Most Used
          </a>
        </div>
        <div className="mx-[7px] flex-1 border border-b-0 border-[#dfdde0] pt-[9px] pl-[17px]">
          <label className="flex items-center gap-[10px] text-[15px]">
            <input
              type="checkbox"
              className="h-[15px] w-[15px] appearance-none border-t-2 border-r border-b border-l-2 border-t-[#7f7d80] border-r-[#e2e0e3] border-b-[#e2e0e3] border-l-[#7f7d80] bg-white"
            />
            Uncategorized
          </label>
        </div>
      </section>
    </div>
  </aside>
);

const PageTitle = () => (
  <div className="flex h-[70px] items-start pr-[10px]">
    <svg viewBox="0 0 38 38" className="mt-[19px] ml-[3px] h-[38px] w-[38px]" stroke="#7b797c" strokeWidth="1.300">
      <path d="M16 23L1 37" stroke="#555" strokeWidth="2" />
      <path d="M2 37H26" stroke="#cfcfcf" />
      <path
        d="M24 1L37 13Q36 16 32 14L27 20Q28 26 24 30L8 16Q13 12 19 14L24 8Q21 4 24 1Z"
        fill="#e9e7ea"
      />
      <path d="M24 8L32 14M19 14L27 20" fill="none" />
      <path d="M24 12L27 14" stroke="#fff" strokeWidth="3" />
    </svg>
    <h2 className="mt-[16px] ml-[10px] font-['Liberation_Serif',serif] text-[33px] leading-[46px] text-[#58565a] italic">
      Add New Post
    </h2>
    <div className="mt-[26px] ml-[13px]">
      <HelpDot />
    </div>
    <button className={`${pill} mt-3 ml-auto h-[27px] w-[356px] text-[14px]`}>Help</button>
    <button className="h-[27px] w-[122px] rounded-b-[4px] bg-linear-to-b from-[#eceaed] to-[#d6d4d7] text-[12px] text-[#636164]">
      Screen Options <span className="text-[9px] text-[#b0aeb1]">▼</span>
    </button>
    <button className="ml-2 h-[27px] w-[54px] rounded-b-[4px] bg-linear-to-b from-[#eceaed] to-[#d6d4d7] text-[12px] text-[#636164]">
      Help <span className="text-[9px] text-[#b0aeb1]">▼</span>
    </button>
  </div>
);

const Scrollbar = () => (
  <div className="flex w-5 shrink-0 flex-col items-center bg-[#f3f2f4]">
    <svg viewBox="0 0 20 22" className="h-[22px] w-5"><path d="M6 15H14L10 10Z" fill="#333" /></svg>
    <div className="flex w-[17px] basis-[61.5%] items-center justify-center rounded-[2px] border border-[#8e8c90] bg-linear-to-r from-[#f2f1f3] to-[#c6c5c9]">
      <svg viewBox="0 0 9 10" className="h-[10px] w-[9px]"><path d="M0 1H9M0 4H9M0 7H9" stroke="#555" /></svg>
    </div>
    <svg viewBox="0 0 20 22" className="mt-auto h-[22px] w-5"><path d="M6 9H14L10 14Z" fill="#333" /></svg>
  </div>
);

/* Taskbar */

const tile = 'h-10 w-10';

const StartIcon = () => (
  <svg viewBox="0 0 48 44" className="h-11 w-12">
    <defs>
      <radialGradient id="orb" cx="0.500" cy="0.900" r="0.900">
        <stop offset="0" stopColor="#5ed0ee" />
        <stop offset="0.500" stopColor="#22679c" />
        <stop offset="1" stopColor="#8b9db4" />
      </radialGradient>
    </defs>
    <ellipse cx="24" cy="22" rx="23" ry="21" fill="url(#orb)" stroke="#6a8fb0" />
    <path d="M15 12Q19 9 23 12L21 21Q17 18 13 21Z" fill="#e4572b" />
    <path d="M25 13Q29 16 34 13L32 22Q27 25 23 22Z" fill="#8cc63e" />
    <path d="M12 23Q16 20 20 23L18 32Q14 29 10 32Z" fill="#4aa8e8" />
    <path d="M22 24Q27 27 31 24L29 33Q25 36 20 33Z" fill="#f9c32c" />
  </svg>
);
const ExplorerIcon = () => (
  <svg viewBox="0 0 40 40" className={tile}>
    <path d="M1 5L8 3L12 6H36L38 9V36H1Z" fill="#f0d98a" />
    <path d="M10 6H16V11H10ZM20 8H27V13H20Z" fill="#fff" />
    <path d="M4 5H8V8H4Z" fill="#3d9a3d" />
    <path d="M13 6H17V9H13Z" fill="#c33" />
    <path d="M29 8H33V11H29Z" fill="#3f87c8" />
    <path d="M1 12H38V36H1Z" fill="#f6e3a1" />
    <path d="M7 38V29Q7 25 11 25H30Q34 25 34 29V38H28V31H13V38Z" fill="#8fcbe8" stroke="#bfe4f4" />
  </svg>
);
const ChromeIcon = () => (
  <svg viewBox="0 0 40 40" className={tile}>
    <path d="M20 20L4 11A18.500 18.500 0 0 1 37 13Z" fill="#dc3b2c" />
    <path d="M20 20L37 13A18.500 18.500 0 0 1 19 38.500Z" fill="#fbd43c" />
    <path d="M20 20L19 38.500A18.500 18.500 0 0 1 4 11Z" fill="#45a245" />
    <circle cx="20" cy="17" r="8" fill="#5c6672" />
    <circle cx="20" cy="17" r="6" fill="#2f6fc4" />
    <circle cx="18" cy="15" r="2.500" fill="#7fb0ea" />
  </svg>
);
const IeIcon = () => (
  <svg viewBox="0 0 40 40" className={tile}>
    <path d="M35 27A14 14 0 1 1 35 21H13" fill="none" stroke="#3db2e6" strokeWidth="6.500" />
    <path d="M5 37Q-1 34 8 20Q18 6 32 2Q40 1 36 10" fill="none" stroke="#f3bd27" strokeWidth="3" />
  </svg>
);
const ItunesIcon = () => (
  <svg viewBox="0 0 40 40" className={tile}>
    <circle cx="20" cy="20" r="18" fill="#3f87d8" stroke="#dfe9f5" strokeWidth="2" />
    <path d="M4 18A16 16 0 0 1 36 18Q20 10 4 18Z" fill="#a7cbf2" />
    <path d="M15 27V12L28 9V24" fill="none" stroke="#10141c" strokeWidth="3" />
    <path d="M15 12L28 9V13L15 16Z" fill="#10141c" />
    <ellipse cx="12.500" cy="27" rx="4" ry="3.200" fill="#10141c" />
    <ellipse cx="25.500" cy="24.500" rx="4" ry="3.200" fill="#10141c" />
  </svg>
);
const SkypeIcon = () => (
  <svg viewBox="0 0 40 40" className={tile}>
    <circle cx="20" cy="20" r="16" fill="#1eaeea" />
    <circle cx="12" cy="11" r="9" fill="#1eaeea" />
    <circle cx="28" cy="29" r="9" fill="#1eaeea" />
    <path d="M27 14Q25 10 20 10Q13 10 13.500 15Q14 19 20 20Q27 21 27 25Q27 30 20 30Q14 30 12.500 25.500" fill="none" stroke="#fff" strokeWidth="4" />
  </svg>
);
const WordIcon = () => (
  <svg viewBox="0 0 40 40" className={tile}>
    <path d="M2 34V12Q4 2 14 2H32V36Z" fill="#dfe8f7" stroke="#5c7fc0" />
    <path d="M4 32Q3 10 17 6V30Z" fill="#4d70b8" />
    <path d="M12 8L37 10V39L12 34Z" fill="#fff" stroke="#9fb3da" />
    <text x="13" y="22" fontSize="14" fontWeight="700" fontStyle="italic" fontFamily="Liberation Serif" fill="#2b4c94">W</text>
    <path d="M28 15H34M28 19H34M15 26L34 28M15 30L34 33" stroke="#2b4c94" strokeWidth="2" />
  </svg>
);
const PowerpointIcon = () => (
  <svg viewBox="0 0 40 40" className={tile}>
    <path d="M2 34V12Q4 2 14 2H32V36Z" fill="#f5c3ac" stroke="#dd7b51" />
    <path d="M9 10L38 11V39L9 34Z" fill="#fff" stroke="#e79a78" />
    <path d="M12 15H35V33L12 30Z" fill="#d9532b" />
    <path d="M14 19H20M14 23H20M14 27H20" stroke="#fff" strokeWidth="2" />
    <circle cx="28" cy="23" r="5" fill="#fff" />
    <path d="M28 23V17L34 20Z" fill="#d9532b" />
  </svg>
);
const VisioIcon = () => (
  <svg viewBox="0 0 40 40" className={tile}>
    <path d="M2 34V12Q4 2 14 2H32V36Z" fill="#c9d4ec" stroke="#7186b8" />
    <path d="M12 8L37 10V39L5 34Z" fill="#fff" stroke="#9fb3da" />
    <path d="M14 11H22V18H14ZM27 24L34 29L29 34L23 28Z" fill="#33509c" />
    <path d="M17 20V29H23" fill="none" stroke="#33509c" strokeWidth="2" strokeDasharray="3 2" />
  </svg>
);
const SolidworksIcon = () => (
  <svg viewBox="0 0 40 40" className={tile}>
    <path d="M20 1L39 8L20 15L1 8Z" fill="#f0605c" />
    <path d="M1 8L20 15V39L1 32Z" fill="#cf1f22" />
    <path d="M39 8L20 15V39L39 32Z" fill="#a3090f" />
    <text x="4" y="28" fontSize="19" fontWeight="700" fontFamily="Liberation Sans" fill="#fff">S</text>
    <text x="20" y="29" fontSize="18" fontWeight="700" fontFamily="Liberation Sans" fill="#fff">W</text>
  </svg>
);
const AutocadIcon = () => (
  <svg viewBox="0 0 40 40" className={tile}>
    <path d="M2 12H38V39H2Z" fill="#f0efef" />
    <path d="M10 1L27 26L22 28L17 23L12 24L10 28L4 29Z" fill="#c8202a" stroke="#8e1119" />
    <path d="M12 13L15 19H11Z" fill="#7c0f16" />
    <text x="27" y="21" fontSize="9" fontWeight="700" fontFamily="Liberation Sans" fill="#c8202a">20</text>
    <text x="27" y="30" fontSize="9" fontWeight="700" fontFamily="Liberation Sans" fill="#c8202a">10</text>
  </svg>
);
const HpIcon = () => (
  <svg viewBox="0 0 40 40" className={tile}>
    <path d="M1 4L8 1V9Z" fill="#3f9ed8" />
    <path d="M32 1L39 6L31 9Z" fill="#46b04c" />
    <path d="M1 37L4 30L9 34Z" fill="#e34a7b" />
    <path d="M30 31L38 33L35 39Z" fill="#f0b732" />
    <circle cx="20" cy="20" r="15" fill="#2b2d31" />
    <text x="10" y="26" fontSize="19" fontStyle="italic" fontFamily="Liberation Sans" fill="#dfe2e6">hp</text>
  </svg>
);
const PdfIcon = () => (
  <svg viewBox="0 0 40 40" className={tile}>
    <path d="M12 1H32L39 9V39H12Z" fill="#fff" />
    <path d="M32 1V9H39Z" fill="#b9b9b9" />
    <rect y="4" width="27" height="11" fill="#cf2228" />
    <text x="1" y="13" fontSize="9" fontWeight="700" fontFamily="Liberation Sans" fill="#fff">PDFill</text>
    <path d="M17 19L24 20L36 36M34 22L18 37" fill="none" stroke="#1018d8" strokeWidth="3.400" />
    <path d="M30 18Q29 23 33 24Q37 24 37 20" fill="none" stroke="#1018d8" strokeWidth="2.600" />
    <path d="M16 23L22 18" stroke="#1018d8" strokeWidth="4" />
  </svg>
);
const MessengerIcon = () => (
  <svg viewBox="0 0 40 40" className={tile}>
    <circle cx="13" cy="12" r="5.500" fill="#7fbf4d" />
    <path d="M6 36Q5 18 13 18Q20 18 20 37Z" fill="#66ad3f" />
    <circle cx="26" cy="10" r="6" fill="#8fc1e8" />
    <path d="M19 37Q18 17 26 17Q35 17 34 36Z" fill="#5d9cd3" />
    <path d="M1 24Q14 20 22 28Q30 34 39 25" fill="none" stroke="#e3bf57" strokeWidth="4" />
  </svg>
);
const FirefoxIcon = () => (
  <svg viewBox="0 0 40 40" className={tile}>
    <circle cx="20" cy="21" r="18" fill="#e66a1c" />
    <circle cx="22" cy="14" r="13" fill="#3b86cf" />
    <path d="M17 4Q24 0 30 7Q24 12 17 10Z" fill="#9fcdf0" />
    <path d="M3 8Q8 8 9 12Q14 10 18 15L13 18Q14 26 21 26Q29 25 31 16Q32 9 29 5Q38 12 38 22Q36 37 20 39Q4 38 2 22Q1 14 3 8Z" fill="#e8731c" />
    <path d="M31 8Q38 14 37 23Q34 36 22 38Q31 33 33 24Q34 15 31 8Z" fill="#f9c63d" />
  </svg>
);
const ClockAppIcon = () => (
  <svg viewBox="0 0 40 40" className={tile}>
    <rect x="3" y="2" width="34" height="36" rx="5" fill="#e8e8e6" />
    <path d="M3 19H37" stroke="#555" strokeWidth="2" />
    <path d="M13 27H27V38H13Z" fill="#222" />
    <circle cx="20" cy="19" r="11" fill="#fff" stroke="#5c5e61" strokeWidth="3.500" />
    <path d="M14 18L19 24L26 14" fill="none" stroke="#2e8fc4" strokeWidth="3.500" />
  </svg>
);

const apps = [
  { name: 'Explorer', Icon: ExplorerIcon },
  { name: 'Chrome', Icon: ChromeIcon, open: true },
  { name: 'Internet Explorer', Icon: IeIcon, open: true, active: true },
  { name: 'iTunes', Icon: ItunesIcon, open: true },
  { name: 'Skype', Icon: SkypeIcon },
  { name: 'Word', Icon: WordIcon },
  { name: 'PowerPoint', Icon: PowerpointIcon, open: true },
  { name: 'Visio', Icon: VisioIcon },
  { name: 'SolidWorks', Icon: SolidworksIcon },
  { name: 'AutoCAD', Icon: AutocadIcon },
  { name: 'HP', Icon: HpIcon },
  { name: 'PDFill', Icon: PdfIcon },
  { name: 'Messenger', Icon: MessengerIcon },
  { name: 'Firefox', Icon: FirefoxIcon },
  { name: 'Time', Icon: ClockAppIcon },
];

const appState = (open?: boolean, active?: boolean) => {
  if (active) return 'border-[#c9d3e4] bg-linear-to-br from-[#cbd3e0] to-[#7587ac]';
  if (open) return 'border-[#8b9cbd] bg-linear-to-br from-[#7c8cae] to-[#1b3a74]';
  return 'border-transparent';
};

const Taskbar = () => (
  <div className="flex h-[49px] items-stretch border-t-2 border-[#4d6b9a] bg-linear-to-r from-[#042459] via-[#022a68] to-[#06265a]">
    <button aria-label="Start" className="flex w-[72px] items-center justify-center pr-[6px]">
      <StartIcon />
    </button>
    <div className="flex max-w-[1150px] flex-1">
      {apps.map(({ name, Icon, open, active }) => (
        <div key={name} className="flex flex-1 px-[2px] pb-px">
          <button
            aria-label={name}
            className={`flex flex-1 items-center justify-center rounded-[3px] border ${appState(open, active)}`}
          >
            <Icon />
          </button>
        </div>
      ))}
    </div>
    <div className="ml-auto flex items-center">
      <svg viewBox="0 0 140 22" className="mr-[5px] h-[22px] w-[140px]" fill="#fff" stroke="#fff">
        <path d="M4 13H12L8 8Z" stroke="none" />
        <path d="M32 3V21" strokeWidth="2" />
        <path d="M33 3H40V6H47L44 13H39V11H33Z" stroke="none" />
        <path d="M61 5H70V20H61ZM64 3H67" fill="none" strokeWidth="2" />
        <path d="M65 8H76V13Q76 16 73 16V20H69V16Q66 16 65 13ZM67 4H69V8H67ZM72 4H74V8H72Z" stroke="none" />
        <path d="M93 6H107V16H93ZM97 20H106M101 16V20" fill="none" strokeWidth="2" />
        <path d="M90 2H95V7H90Z" fill="#0a2a60" strokeWidth="1.500" />
        <path d="M119 8H123L128 3V20L123 15H119Z" stroke="none" />
        <path d="M131 8Q133 11.500 131 15M134 5Q138 11.500 134 18" fill="none" strokeWidth="1.300" />
      </svg>
      <div className="w-[102px] text-center font-['Open_Sans',sans-serif] text-[14px] leading-[21px] text-white">
        23:04
        <br />
        20/03/2011
      </div>
      <button
        aria-label="Show desktop"
        className="h-full w-4 border border-[#5b74a0] bg-linear-to-b from-[#5f769f] to-[#0a2554]"
      />
    </div>
  </div>
);

type CalloutProps = { place: string; width: number; height: number; d: string; children: ReactNode };

const Callout = ({ place, width, height, d, children }: CalloutProps) => (
  <div
    className={`absolute flex items-center justify-center text-center font-['Liberation_Sans',sans-serif] text-[36px] leading-[41px] text-black ${place}`}
  >
    <svg viewBox={`0 0 ${width} ${height}`} className="absolute inset-0 h-full w-full overflow-visible">
      <path d={d} fill="#ff0" stroke="#111" strokeWidth="2.500" strokeLinejoin="round" />
    </svg>
    <p className="relative pr-1 pb-[2px]">{children}</p>
  </div>
);

export default function App() {
  return (
    <div className="min-h-screen bg-black pt-[268px] pr-[30px] pl-10 font-['DejaVu_Sans',sans-serif]">
      <div className="relative">
        <BrowserBar />
        <div className="flex">
          <div className="min-w-0 flex-1 bg-[#f9f8fa]">
            <BlogHeader />
            <div className="flex pl-[19px]">
              <Sidebar />
              <div className="min-w-0 flex-1 pr-[9px] pl-[25px]">
                <PageTitle />
                <p className="mr-[10px] flex h-[37px] items-center border-2 border-[#e8e795] bg-[#fffee0] px-[10px] pt-px text-[15px] text-[#464447]">
                  <span>
                    <b>Pro Tip:</b> Have you checked out how you could <b>use your blogs for teaching with students?</b>{' '}
                    <a href="#" className={link}>Click here to learn more!</a>
                  </span>
                </p>
                <div className="flex gap-[14px]">
                  <div className="flex min-w-0 flex-1 pt-[37px]">
                    <EditorColumn />
                  </div>
                  <div className="flex pt-8">
                    <RightColumn />
                  </div>
                </div>
              </div>
            </div>
          </div>
          <Scrollbar />
        </div>
        <Taskbar />

        <Callout
          place="left-[565px] top-[180px] h-[120px] w-[256px]"
          width={256}
          height={120}
          d="M30 0H226A30 32 0 0 1 256 32V88A30 32 0 0 1 226 120H30A30 32 0 0 1 0 88V79L-64 109L0 56V32A30 32 0 0 1 30 0Z"
        >
          1. Add Title
        </Callout>
        <Callout
          place="right-[663px] top-[373px] h-[143px] w-[250px]"
          width={250}
          height={143}
          d="M30 0H220A30 34 0 0 1 250 34V109A30 34 0 0 1 220 143H30A30 34 0 0 1 0 109V93L-57 144L0 67V34A30 34 0 0 1 30 0Z"
        >
          2. Add
          <br />
          content
        </Callout>
        <Callout
          place="right-[403px] top-[570px] h-[123px] w-[276px]"
          width={276}
          height={123}
          d="M36 0H240A36 34 0 0 1 276 34V53L490 68L276 80V89A36 34 0 0 1 240 123H36A36 34 0 0 1 0 89V34A36 34 0 0 1 36 0Z"
        >
          4. Click
          <br />
          Publish
        </Callout>
        <Callout
          place="right-[474px] top-[780px] h-[167px] w-[295px]"
          width={295}
          height={167}
          d="M38 0H257A38 42 0 0 1 295 42V58L374 57L295 81V125A38 42 0 0 1 257 167H38A38 42 0 0 1 0 125V42A38 42 0 0 1 38 0Z"
        >
          3. Add tags
          <br />
          and categories
        </Callout>
      </div>

      <footer className="pt-[84px] pr-[111px] text-center font-['Liberation_Serif',serif] text-[36px] leading-[46px] text-[#14596c]">
        Created by Paul Leacy
      </footer>
    </div>
  );
}
